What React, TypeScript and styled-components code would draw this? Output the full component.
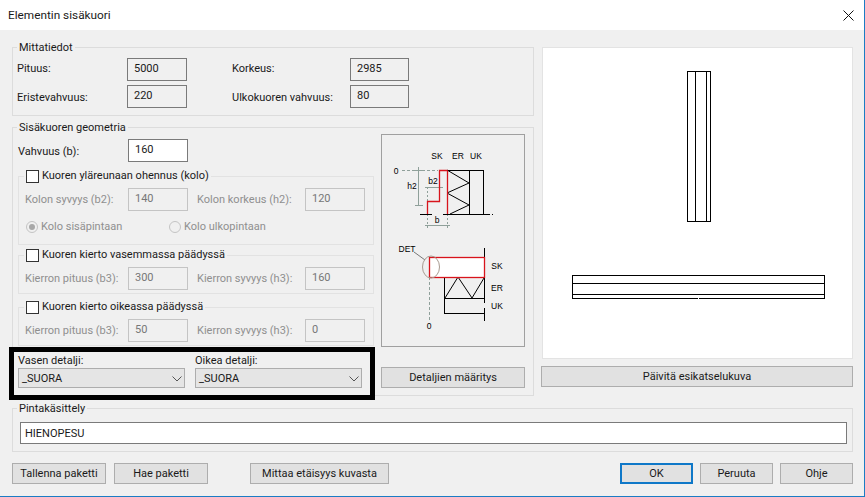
import React from 'react';
import styled, { createGlobalStyle } from 'styled-components';

const GlobalStyle = createGlobalStyle`
  html, body {
    margin: 0;
    padding: 0;
    background: #f0f0f0;
  }
  body {
    font-family: Roboto, "Liberation Sans", sans-serif;
    font-size: 11px;
    color: #1a1a1a;
  }
`;

const Window = styled.div`
  width: 865px;
  height: 497px;
  box-sizing: border-box;
  background: #f0f0f0;
  border-right: 1px solid #1b7cc4;
  border-bottom: 1px solid #1b7cc4;
  overflow: hidden;
`;

const TitleBar = styled.div`
  height: 30px;
  background: #fff;
  display: flex;
  align-items: center;
  justify-content: space-between;
  padding: 0 10px 0 8px;
  font-size: 11.8px;
`;

const Content = styled.div`
  padding: 10px 11px 0 12px;
`;

const TopRow = styled.div`
  display: flex;
  gap: 7px;
  height: 356px;
`;

const LeftColumn = styled.div`
  width: 522px;
  display: flex;
  flex-direction: column;
  gap: 4px;
`;

const RightColumn = styled.div`
  width: 312px;
  padding-top: 7px;
`;

const Group = styled.fieldset<{ $height?: number }>`
  margin: 0;
  padding: 0;
  min-width: 0;
  box-sizing: border-box;
  border: 1px solid #dcdcdc;
  ${({ $height }) => ($height ? `height: ${$height}px;` : '')}
`;

const GroupTitle = styled.legend`
  margin-left: 4px;
  padding: 0 2px;
  line-height: 16px;
  height: 14px;
`;

const FieldGrid = styled.div`
  display: grid;
  grid-template-columns: 110px 60px 45px 118px 59px;
  row-gap: 4px;
  padding: 4px 0 0 4px;
  align-items: center;
`;

const FieldLabel = styled.label<{ $col?: number; $nudge?: number }>`
  line-height: 16px;
  ${({ $col }) => ($col ? `grid-column: ${$col};` : '')}
  ${({ $nudge }) => ($nudge ? `transform: translateY(${$nudge}px);` : '')}
`;

const ValueBox = styled.div<{ $white?: boolean; $disabled?: boolean }>`
  height: 23px;
  box-sizing: border-box;
  padding: 0 0 2px 6px;
  display: flex;
  align-items: center;
  background: ${({ $white }) => ($white ? '#fff' : '#f0f0f0')};
  border: 1px solid ${({ $disabled }) => ($disabled ? '#c4c4c4' : '#7a7a7a')};
  color: ${({ $disabled }) => ($disabled ? '#777' : '#1a1a1a')};
`;

const GeometryBody = styled.div`
  display: flex;
  gap: 7px;
  padding-left: 5px;
`;

const GeometryFields = styled.div`
  width: 356px;
  padding-top: 5px;
`;

const ThicknessRow = styled.div`
  display: grid;
  grid-template-columns: 110px 60px;
  align-items: center;
`;

const SubGroup = styled.fieldset<{ $gap: number; $bottom: number }>`
  margin: ${({ $gap }) => $gap}px 0 0;
  padding: 5px 0 ${({ $bottom }) => $bottom}px 6px;
  min-width: 0;
  box-sizing: border-box;
  border: 1px solid #e2e2e2;
`;

const CheckTitle = styled.legend`
  margin-left: -1px;
  padding: 0 2px;
  height: 14px;
  display: flex;
  align-items: center;
  gap: 3px;
  line-height: 14px;
`;

const CheckBox = styled.span`
  width: 13px;
  height: 13px;
  box-sizing: border-box;
  background: #fff;
  border: 1px solid #333;
`;

const SubRow = styled.div`
  display: grid;
  grid-template-columns: 103px 60px 9px 108px 60px;
  align-items: center;
`;

const DisabledLabel = styled.span<{ $col?: number }>`
  color: #8f8f8f;
  line-height: 16px;
  ${({ $col }) => ($col ? `grid-column: ${$col};` : '')}
`;

const RadioRow = styled.div`
  display: flex;
  height: 16px;
  margin: 8px 0 0 1px;
  align-items: center;
`;

const RadioItem = styled.div<{ $width: number }>`
  width: ${({ $width }) => $width}px;
  display: flex;
  align-items: center;
  gap: 3px;
`;

const Radio = styled.span<{ $checked?: boolean }>`
  width: 12px;
  height: 12px;
  box-sizing: border-box;
  border-radius: 50%;
  border: 1px solid #c4c4c4;
  background: #f0f0f0;
  display: flex;
  align-items: center;
  justify-content: center;
  &::after {
    content: '';
    width: 6px;
    height: 6px;
    border-radius: 50%;
    background: ${({ $checked }) => ($checked ? '#a8a8a8' : 'transparent')};
  }
`;

const DetailFrame = styled.div`
  width: 366px;
  height: 53px;
  margin: 1px 0 0 -9px;
  box-sizing: border-box;
  border: 5px solid #000;
  padding-left: 4px;
  background: #f0f0f0;
  display: flex;
  gap: 10px;
`;

const DetailColumn = styled.div`
  width: 167px;
`;

const DetailLabel = styled.div`
  height: 16px;
  line-height: 17px;
`;

const Select = styled.div`
  height: 20px;
  box-sizing: border-box;
  padding: 1px 2px 0 3px;
  background: #e5e5e5;
  border: 1px solid #adadad;
  display: flex;
  align-items: center;
  justify-content: space-between;
`;

const SketchColumn = styled.div`
  width: 144px;
  display: flex;
  flex-direction: column;
  gap: 20px;
`;

const SketchPanel = styled.div`
  height: 213px;
  box-sizing: border-box;
  border: 1px solid #a0a0a0;
  overflow: hidden;
`;

const PreviewPanel = styled.div`
  height: 312px;
  margin-left: 1px;
  box-sizing: border-box;
  background: #fff;
  border: 1px solid #e3e3e3;
  overflow: hidden;
`;

const Drawing = styled.svg`
  display: block;
  shape-rendering: crispEdges;
`;

const SketchText = styled.text`
  font-family: "Liberation Sans", sans-serif;
  font-size: 8.5px;
  fill: #000;
  text-anchor: middle;
  shape-rendering: auto;
`;

const RedOutline = styled.g`
  fill: none;
  stroke: #d8141c;
  stroke-width: 1.3;
  shape-rendering: auto;
`;

const Button = styled.div<{ $width?: number; $primary?: boolean; $push?: number }>`
  height: 21px;
  width: ${({ $width }) => ($width ? `${$width}px` : 'auto')};
  box-sizing: border-box;
  flex: none;
  display: flex;
  align-items: center;
  justify-content: center;
  background: #e1e1e1;
  border: ${({ $primary }) => ($primary ? '2px solid #0f78c8' : '1px solid #adadad')};
  ${({ $push }) => ($push ? `margin-left: ${$push}px;` : '')}
`;

const PreviewButton = styled(Button)`
  margin-top: 7px;
`;

const SurfaceBody = styled.div`
  padding: 7px 5px 7px 7px;
`;

const SurfaceInput = styled(ValueBox)`
  height: 22px;
  padding: 0 0 0 4px;
  border-color: #7a7a7a;
`;

const SurfaceGroup = styled(Group)`
  margin-top: 5px;
`;

const ButtonRow = styled.div`
  display: flex;
  gap: 8px;
  margin-top: 11px;
`;

const DialogActions = styled.div`
  margin-left: auto;
  display: flex;
  gap: 7px;
`;

// wall sections: recess dimensions on top, plan of the wall end with the detail marker below
const WallSketch = () => (
  <Drawing width={142} height={211} viewBox="382 135 142 211">
    <SketchText x={437} y={159}>SK</SketchText>
    <SketchText x={458} y={159}>ER</SketchText>
    <SketchText x={476} y={159}>UK</SketchText>
    <SketchText x={396} y={174}>0</SketchText>
    <SketchText x={412} y={189}>h2</SketchText>
    <SketchText x={433} y={184}>b2</SketchText>
    <SketchText x={437} y={223}>b</SketchText>
    <g fill="none" stroke="#8fa09a">
      <path d="M402 170.5H438" strokeDasharray="3 2" />
      <path d="M418.5 167V205" />
      <path d="M415 205.5H423M415 170.5H423" />
      <path d="M425 187.5H443" />
      <path d="M427.5 187V201M427.5 214V228M447.5 214V228" strokeDasharray="2 2" />
      <path d="M425 225.5H450" />
    </g>
    <g fill="none" stroke="#000">
      <path d="M447 170.5H483.5V214M469.5 170V214" />
      <path d="M420 214.5H432M443 214.5H490M492 214.5H493" />
      <path d="M447 170L469 183L447 193L469 205L450 214" shapeRendering="auto" />
    </g>
    <RedOutline>
      <path d="M447.5 170.5H439.5V201.5H427.5V214M447.5 170.5V214" />
    </RedOutline>

    <SketchText x={407} y={252}>DET</SketchText>
    <SketchText x={497} y={269}>SK</SketchText>
    <SketchText x={497} y={291}>ER</SketchText>
    <SketchText x={497} y={309}>UK</SketchText>
    <SketchText x={429} y={329}>0</SketchText>
    <path d="M429.5 277V322" fill="none" stroke="#8fa09a" strokeDasharray="3 2" />
    <g fill="none" stroke="#000">
      <path d="M484.5 248V263M484.5 268V303M484.5 308V321" />
      <path d="M444.5 277V313.5H484M444.5 298.5H484" />
      <path d="M445 298L458 277L472 298L484 278" shapeRendering="auto" />
      <path d="M414 252L425 260" stroke="#777" shapeRendering="auto" />
    </g>
    <rect x={429.5} y={257.5} width={55} height={20} fill="#fff" />
    <RedOutline>
      <rect x={429.5} y={257.5} width={55} height={20} />
    </RedOutline>
    <ellipse cx={431} cy={267} rx={8.5} ry={11} fill="none" stroke="#a89a90" shapeRendering="auto" />
  </Drawing>
);

const PreviewDrawing = () => (
  <Drawing width={310} height={310} viewBox="543 48 310 310">
    <g fill="none" stroke="#000">
      <rect x={687.5} y={71.5} width={23} height={150} />
      <path d="M695.5 71V222M706.5 71V222" />
      <rect x={572.5} y={275.5} width={252} height={23} />
      <path d="M572 283.5H825M572 294.5H825" />
    </g>
    <path d="M698.5 298V299" stroke="#fff" />
  </Drawing>
);

const Chevron = () => (
  <svg width="10" height="6" viewBox="0 0 10 6">
    <path d="M0.5 0.5L5 5L9.5 0.5" fill="none" stroke="#555" />
  </svg>
);

const CloseIcon = () => (
  <svg width="11" height="11" viewBox="0 0 11 11">
    <path d="M0.5 0.5L10.5 10.5M10.5 0.5L0.5 10.5" fill="none" stroke="#111" />
  </svg>
);

const DisabledRow = ({ left, leftValue, right, rightValue }: {
  left: string;
  leftValue: string;
  right: string;
  rightValue: string;
}) => (
  <SubRow>
    <DisabledLabel>{left}</DisabledLabel>
    <ValueBox $disabled>{leftValue}</ValueBox>
    <DisabledLabel $col={4}>{right}</DisabledLabel>
    <ValueBox $disabled>{rightValue}</ValueBox>
  </SubRow>
);

const DetailSelect = ({ label }: { label: string }) => (
  <DetailColumn>
    <DetailLabel>{label}</DetailLabel>
    <Select>
      _SUORA
      <Chevron />
    </Select>
  </DetailColumn>
);

export default function App() {
  return (
    <>
      <GlobalStyle />
      <Window>
        <TitleBar>
          <span>Elementin sisäkuori</span>
          <CloseIcon />
        </TitleBar>
        <Content>
          <TopRow>
            <LeftColumn>
              <Group $height={76}>
                <GroupTitle>Mittatiedot</GroupTitle>
                <FieldGrid>
                  <FieldLabel $nudge={-1}>Pituus:</FieldLabel>
                  <ValueBox>5000</ValueBox>
                  <FieldLabel $col={4} $nudge={-1}>Korkeus:</FieldLabel>
                  <ValueBox>2985</ValueBox>
                  <FieldLabel $nudge={1}>Eristevahvuus:</FieldLabel>
                  <ValueBox>220</ValueBox>
                  <FieldLabel $col={4} $nudge={1}>Ulkokuoren vahvuus:</FieldLabel>
                  <ValueBox>80</ValueBox>
                </FieldGrid>
              </Group>
              <Group $height={276}>
                <GroupTitle>Sisäkuoren geometria</GroupTitle>
                <GeometryBody>
                  <GeometryFields>
                    <ThicknessRow>
                      <FieldLabel $nudge={1}>Vahvuus (b):</FieldLabel>
                      <ValueBox $white>160</ValueBox>
                    </ThicknessRow>
                    <SubGroup $gap={7} $bottom={9}>
                      <CheckTitle><CheckBox />Kuoren yläreunaan ohennus (kolo)</CheckTitle>
                      <DisabledRow left="Kolon syvyys (b2):" leftValue="140" right="Kolon korkeus (h2):" rightValue="120" />
                      <RadioRow>
                        <RadioItem $width={143}><Radio $checked /><DisabledLabel>Kolo sisäpintaan</DisabledLabel></RadioItem>
                        <RadioItem $width={150}><Radio /><DisabledLabel>Kolo ulkopintaan</DisabledLabel></RadioItem>
                      </RadioRow>
                    </SubGroup>
                    <SubGroup $gap={3} $bottom={3}>
                      <CheckTitle><CheckBox />Kuoren kierto vasemmassa päädyssä</CheckTitle>
                      <DisabledRow left="Kierron pituus (b3):" leftValue="300" right="Kierron syvyys (h3):" rightValue="160" />
                    </SubGroup>
                    <SubGroup $gap={6} $bottom={3}>
                      <CheckTitle><CheckBox />Kuoren kierto oikeassa päädyssä</CheckTitle>
                      <DisabledRow left="Kierron pituus (b3):" leftValue="50" right="Kierron syvyys (h3):" rightValue="0" />
                    </SubGroup>
                    <DetailFrame>
                      <DetailSelect label="Vasen detalji:" />
                      <DetailSelect label="Oikea detalji:" />
                    </DetailFrame>
                  </GeometryFields>
                  <SketchColumn>
                    <SketchPanel>
                      <WallSketch />
                    </SketchPanel>
                    <Button>Detaljien määritys</Button>
                  </SketchColumn>
                </GeometryBody>
              </Group>
            </LeftColumn>
            <RightColumn>
              <PreviewPanel>
                <PreviewDrawing />
              </PreviewPanel>
              <PreviewButton>Päivitä esikatselukuva</PreviewButton>
            </RightColumn>
          </TopRow>
          <SurfaceGroup $height={51}>
            <GroupTitle>Pintakäsittely</GroupTitle>
            <SurfaceBody>
              <SurfaceInput $white>HIENOPESU</SurfaceInput>
            </SurfaceBody>
          </SurfaceGroup>
          <ButtonRow>
            <Button $width={94}>Tallenna paketti</Button>
            <Button $width={94}>Hae paketti</Button>
            <Button $width={139} $push={34}>Mittaa etäisyys kuvasta</Button>
            <DialogActions>
              <Button $width={73} $primary>OK</Button>
              <Button $width={73}>Peruuta</Button>
              <Button $width={73}>Ohje</Button>
            </DialogActions>
          </ButtonRow>
        </Content>
      </Window>
    </>
  );
}
